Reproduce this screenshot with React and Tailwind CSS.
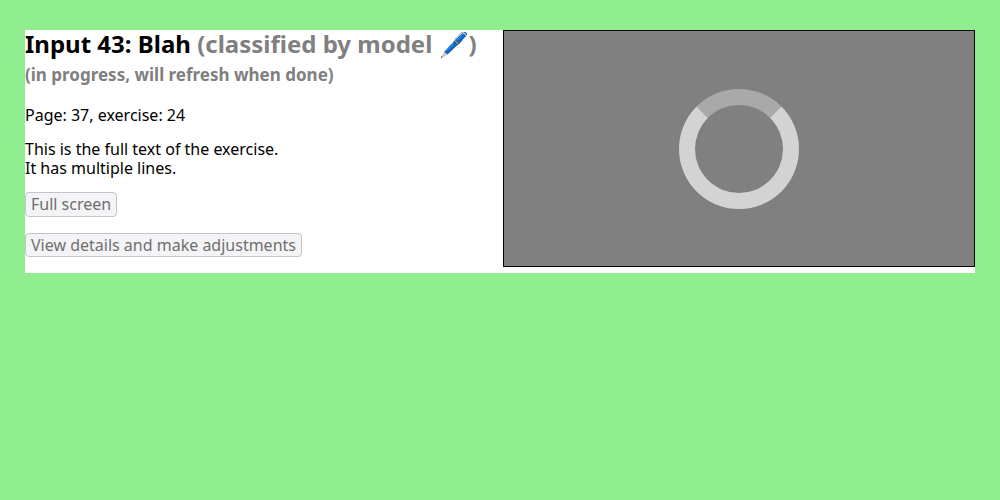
export default function App() {
  return (
    <div className="min-h-screen bg-[#90ee90] px-[25px] py-[30px] font-['Noto_Sans',sans-serif] text-base leading-[19px] text-black">
      <main className="grid grid-cols-2 gap-1.5 bg-white pb-1.5">
        <section className="flex flex-col items-start">
          <h2 className="text-2xl leading-[27px] font-bold whitespace-nowrap">
            Input 43: Blah{' '}
            <span className="text-[#808080]">(classified by model 🖊️)</span>
          </h2>
          <p className="mt-2 text-[17px] leading-[19px] font-bold text-[#808080]">
            (in progress, will refresh when done)
          </p>
          <p className="mt-[22px]">Page: 37, exercise: 24</p>
          <p className="mt-[15px]">
            This is the full text of the exercise.
            <br />
            It has multiple lines.
          </p>
          <button
            type="button"
            disabled
            className="mt-[14px] h-[25px] rounded border border-[#c3c3c9] bg-[#f4f4f6] px-[5px] text-[#6f6f6f]"
          >
            Full screen
          </button>
          <button
            type="button"
            disabled
            className="mt-4 h-6 rounded border border-[#c3c3c9] bg-[#f4f4f6] px-[5px] text-[#6f6f6f]"
          >
            View details and make adjustments
          </button>
        </section>
        <div className="flex aspect-[472/237] items-center justify-center border border-black bg-[#808080]">
          <div
            role="status"
            aria-label="Loading"
            className="size-[120px] rounded-full border-16 border-[#d3d3d3] border-t-[#a9a9a9]"
          />
        </div>
      </main>
    </div>
  );
}
